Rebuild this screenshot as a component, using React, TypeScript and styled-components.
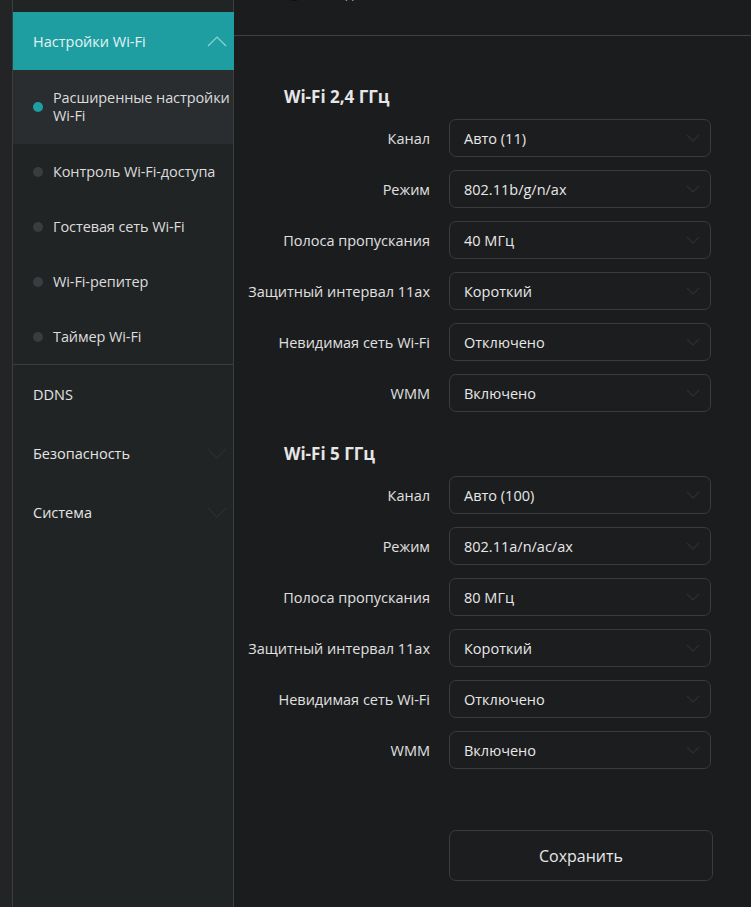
import React from "react"
import styled, { createGlobalStyle } from "styled-components"

const GlobalStyle = createGlobalStyle`
  html, body {
    margin: 0;
    padding: 0;
    background: #1b1c1e;
    font-family: "Open Sans", "Noto Sans", sans-serif;
    color: #e4e4e4;
  }
  * { box-sizing: border-box; }
`

const Page = styled.div`
  display: flex;
  width: 751px;
  height: 907px;
  overflow: hidden;
  background: #1b1c1e;
`

const Gutter = styled.div`
  width: 12px;
  flex-shrink: 0;
  background: #222426;
`

const Sidebar = styled.nav`
  width: 222px;
  flex-shrink: 0;
  background: #212425;
  border-left: 1px solid #3b3d3f;
  border-right: 1px solid #3b3d3f;
  padding-top: 12px;
`

const GroupHeader = styled.div`
  height: 58px;
  display: flex;
  align-items: center;
  justify-content: space-between;
  padding: 0 7px 0 20px;
  background: #1f9ea2;
  color: #e3f3f3;
  font-size: 14.5px;
  margin-right: -1px;
`

const SubList = styled.div`
  border-bottom: 1px solid #3b3d3f;
`

const SubItem = styled.div<{ $active?: boolean }>`
  display: flex;
  align-items: center;
  gap: 10px;
  min-height: 55px;
  padding: ${(p) => (p.$active ? "19px 0 19px 20px" : "0 0 0 20px")};
  background: ${(p) => (p.$active ? "#2a2d30" : "transparent")};
  font-size: 14.5px;
  line-height: 18px;
  color: #dcdcdc;
`

const SubText = styled.span`
  letter-spacing: -0.1px;
`

const Dot = styled.span<{ $active?: boolean }>`
  width: 10px;
  height: 10px;
  border-radius: 50%;
  flex-shrink: 0;
  background: ${(p) => (p.$active ? "#1f9ea2" : "#3a3c3f")};
`

const MenuItem = styled.div`
  height: 59px;
  display: flex;
  align-items: center;
  justify-content: space-between;
  padding: 0 6px 0 20px;
  font-size: 14.5px;
  color: #e4e4e4;
`

const Main = styled.main`
  flex: 1;
  display: flex;
  flex-direction: column;
`

const TopBar = styled.div`
  height: 36px;
  border-bottom: 1px solid #3d3f41;
  overflow: hidden;
  padding-left: 52px;
`

const TopItem = styled.div`
  display: flex;
  align-items: center;
  gap: 8px;
  margin-top: -17px;
`

const Radio = styled.span`
  width: 16px;
  height: 16px;
  border-radius: 50%;
  background: #0e0f10;
`

const TopLink = styled.span`
  font-size: 14px;
  color: #cfcfcf;
  text-decoration: underline;
`

const Form = styled.div`
  padding-top: 50px;
  display: flex;
  flex-direction: column;
`

const Section = styled.section`
  display: flex;
  flex-direction: column;
  gap: 13px;
  & + & {
    margin-top: 31px;
  }
`

const SectionTitle = styled.h3`
  margin: 0 0 -2px 50px;
  font-size: 17px;
  line-height: 22px;
  font-weight: 700;
  color: #e6e6e6;
`

const Row = styled.div`
  display: grid;
  grid-template-columns: 196px 262px;
  column-gap: 19px;
  align-items: center;
`

const Label = styled.label`
  text-align: right;
  font-size: 14.5px;
  color: #e0e0e0;
  white-space: nowrap;
`

const Select = styled.div`
  height: 38px;
  display: flex;
  align-items: center;
  justify-content: space-between;
  padding: 0 10px 0 14px;
  border: 1px solid #3a3b3e;
  border-radius: 7px;
  background: #1c1d1f;
  font-size: 14.5px;
  color: #e8e8e8;
`

const Actions = styled.div`
  margin-top: 61px;
  padding-left: 215px;
`

const SaveButton = styled.button`
  width: 264px;
  height: 51px;
  border: 1px solid #3a3b3e;
  border-radius: 7px;
  background: #1c1d1f;
  color: #e8e8e8;
  font-family: inherit;
  font-size: 16px;
`

const Chevron = ({ up, color }: { up?: boolean; color: string }) => (
  <svg width="20" height="11" viewBox="0 0 20 11" fill="none">
    <path
      d={up ? "M1 10 L10 1 L19 10" : "M1 1 L10 10 L19 1"}
      stroke={color}
      strokeWidth="1.2"
    />
  </svg>
)

const SelectChevron = () => (
  <svg width="14" height="8" viewBox="0 0 14 8" fill="none">
    <path d="M1 1 L7 7 L13 1" stroke="#2b2d30" strokeWidth="1.4" />
  </svg>
)

type Field = { label: string; value: string }

const band24: Field[] = [
  { label: "Канал", value: "Авто (11)" },
  { label: "Режим", value: "802.11b/g/n/ax" },
  { label: "Полоса пропускания", value: "40 МГц" },
  { label: "Защитный интервал 11ax", value: "Короткий" },
  { label: "Невидимая сеть Wi-Fi", value: "Отключено" },
  { label: "WMM", value: "Включено" },
]

const band5: Field[] = [
  { label: "Канал", value: "Авто (100)" },
  { label: "Режим", value: "802.11a/n/ac/ax" },
  { label: "Полоса пропускания", value: "80 МГц" },
  { label: "Защитный интервал 11ax", value: "Короткий" },
  { label: "Невидимая сеть Wi-Fi", value: "Отключено" },
  { label: "WMM", value: "Включено" },
]

const subItems = [
  "Контроль Wi-Fi-доступа",
  "Гостевая сеть Wi-Fi",
  "Wi-Fi-репитер",
  "Таймер Wi-Fi",
]

const BandSection = ({ title, fields }: { title: string; fields: Field[] }) => (
  <Section>
    <SectionTitle>{title}</SectionTitle>
    {fields.map((f) => (
      <Row key={f.label}>
        <Label>{f.label}</Label>
        <Select>
          {f.value}
          <SelectChevron />
        </Select>
      </Row>
    ))}
  </Section>
)

export default function App() {
  return (
    <>
      <GlobalStyle />
      <Page>
        <Gutter />
        <Sidebar>
          <GroupHeader>
            Настройки Wi-Fi
            <Chevron up color="#8fd3d5" />
          </GroupHeader>
          <SubList>
            <SubItem $active>
              <Dot $active />
              <SubText>Расширенные настройки Wi-Fi</SubText>
            </SubItem>
            {subItems.map((s) => (
              <SubItem key={s}>
                <Dot />
                <SubText>{s}</SubText>
              </SubItem>
            ))}
          </SubList>
          <MenuItem>DDNS</MenuItem>
          <MenuItem>
            Безопасность
            <Chevron color="#2c2f32" />
          </MenuItem>
          <MenuItem>
            Система
            <Chevron color="#2c2f32" />
          </MenuItem>
        </Sidebar>
        <Main>
          <TopBar>
            <TopItem>
              <Radio />
              <TopLink>Выход из системы</TopLink>
            </TopItem>
          </TopBar>
          <Form>
            <BandSection title="Wi-Fi 2,4 ГГц" fields={band24} />
            <BandSection title="Wi-Fi 5 ГГц" fields={band5} />
            <Actions>
              <SaveButton>Сохранить</SaveButton>
            </Actions>
          </Form>
        </Main>
      </Page>
    </>
  )
}
